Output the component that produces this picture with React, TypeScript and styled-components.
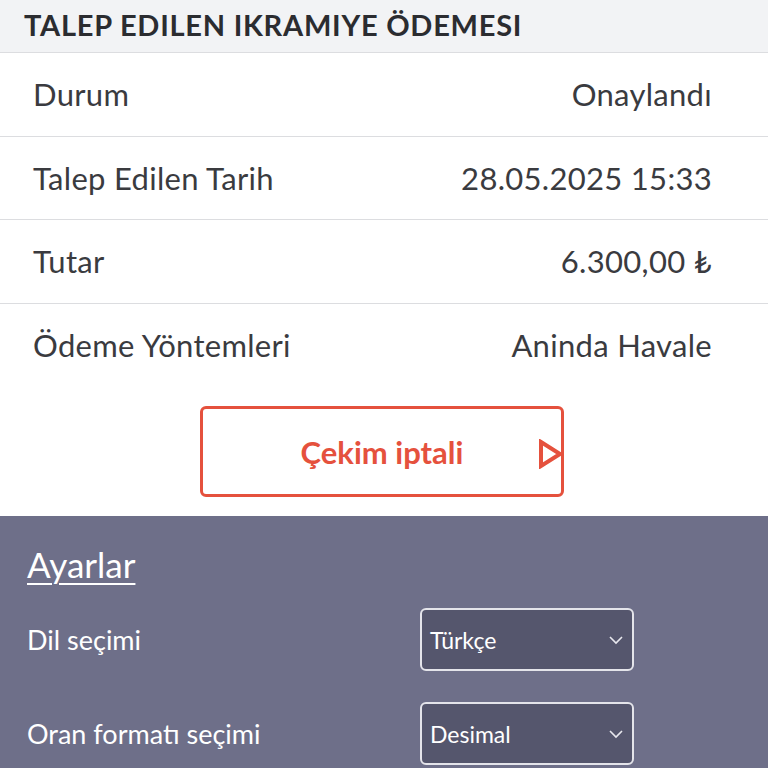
import styled, { createGlobalStyle } from 'styled-components';

const GlobalStyle = createGlobalStyle`
  html, body {
    margin: 0;
    padding: 0;
    background: #ffffff;
  }
  body {
    font-family: Lato, 'Noto Sans', Arial, sans-serif;
    color: #2f3033;
  }
`;

const Page = styled.div`
  width: 768px;
  height: 768px;
  overflow: hidden;
  display: flex;
  flex-direction: column;
  & > * {
    flex-shrink: 0;
  }
`;

const Header = styled.div`
  height: 53px;
  box-sizing: border-box;
  background: #f2f3f5;
  border-bottom: 1px solid #dcdde0;
  display: flex;
  align-items: center;
  padding: 0 24px 4px;
  font-size: 29px;
  font-weight: 700;
  color: #2b2c30;
  letter-spacing: 0.75px;
`;

const Row = styled.div<{ last?: boolean }>`
  height: 83.5px;
  box-sizing: border-box;
  display: flex;
  align-items: center;
  justify-content: space-between;
  padding: 0 56px 0 33px;
  border-bottom: ${(p) => (p.last ? 'none' : '1px solid #dcdde0')};
  font-size: 31px;
  letter-spacing: 0.3px;
  color: #3a3b3f;
`;

const ActionArea = styled.div`
  display: flex;
  padding: 19px 0 19px 200px;
`;

const CancelButton = styled.button`
  position: relative;
  width: 364px;
  height: 91px;
  box-sizing: border-box;
  border: 3px solid #e5513d;
  border-radius: 6px;
  background: #ffffff;
  color: #e5513d;
  font-family: inherit;
  font-size: 31px;
  font-weight: 700;
  display: flex;
  align-items: center;
  justify-content: center;
  padding: 0;
  overflow: hidden;
`;

const Arrow = styled.svg`
  position: absolute;
  right: -2px;
  top: 30px;
`;

const Settings = styled.div`
  flex: 1;
  background: #6e6f89;
  padding: 27px 27px 0;
  display: flex;
  flex-direction: column;
  color: #ffffff;
`;

const SettingsTitle = styled.div`
  font-size: 35px;
  line-height: 42px;
  text-decoration: underline;
  text-underline-offset: 5px;
  text-decoration-thickness: 2px;
  margin-bottom: 23px;
`;

const SettingRow = styled.div`
  display: grid;
  grid-template-columns: 393px 214px;
  align-items: center;
  margin-bottom: 31px;
`;

const SettingLabel = styled.div`
  font-size: 27px;
`;

const Select = styled.div`
  height: 63px;
  box-sizing: border-box;
  border: 2px solid #e4e4ea;
  border-radius: 6px;
  background: #55566d;
  display: flex;
  align-items: center;
  justify-content: space-between;
  padding: 0 8px;
  font-size: 23px;
`;

const Chevron = () => (
  <svg width="16" height="10" viewBox="0 0 16 10">
    <path d="M2 2 L8 8 L14 2" fill="none" stroke="#e8e8ee" strokeWidth="1.6" />
  </svg>
);

const details = [
  { label: 'Durum', value: 'Onaylandı' },
  { label: 'Talep Edilen Tarih', value: '28.05.2025 15:33' },
  { label: 'Tutar', value: '6.300,00 ₺' },
  { label: 'Ödeme Yöntemleri', value: 'Aninda Havale' },
];

const settings = [
  { label: 'Dil seçimi', value: 'Türkçe' },
  { label: 'Oran formatı seçimi', value: 'Desimal' },
];

export default function App() {
  return (
    <Page>
      <GlobalStyle />
      <Header>TALEP EDILEN IKRAMIYE ÖDEMESI</Header>
      {details.map((d, i) => (
        <Row key={d.label} last={i === details.length - 1}>
          <span>{d.label}</span>
          <span>{d.value}</span>
        </Row>
      ))}
      <ActionArea>
        <CancelButton>
          Çekim iptali
          <Arrow width="26" height="30" viewBox="0 0 26 30">
            <path d="M4 3 L23 15 L4 27 Z" fill="none" stroke="#e5513d" strokeWidth="4" strokeLinejoin="miter" />
          </Arrow>
        </CancelButton>
      </ActionArea>
      <Settings>
        <SettingsTitle>Ayarlar</SettingsTitle>
        {settings.map((s) => (
          <SettingRow key={s.label}>
            <SettingLabel>{s.label}</SettingLabel>
            <Select>
              <span>{s.value}</span>
              <Chevron />
            </Select>
          </SettingRow>
        ))}
      </Settings>
    </Page>
  );
}
